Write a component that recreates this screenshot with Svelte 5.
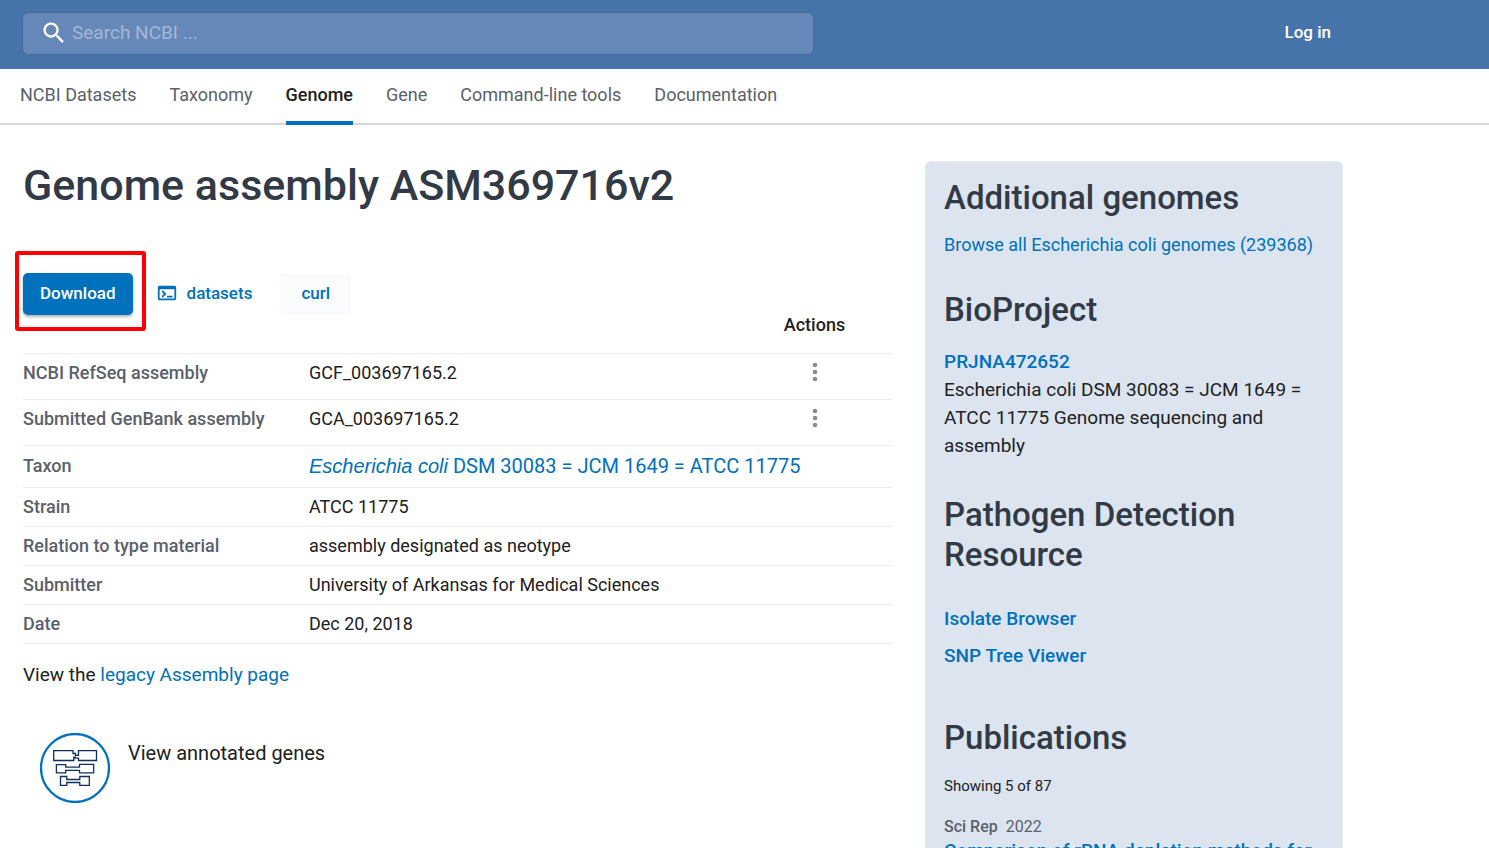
<script>
  const tabs = ['NCBI Datasets', 'Taxonomy', 'Genome', 'Gene', 'Command-line tools', 'Documentation'];
  const current = 'Genome';

  const assemblies = [
    { label: 'NCBI RefSeq assembly', accession: 'GCF_003697165.2' },
    { label: 'Submitted GenBank assembly', accession: 'GCA_003697165.2' }
  ];

  const details = [
    { label: 'Strain', value: 'ATCC 11775' },
    { label: 'Relation to type material', value: 'assembly designated as neotype' },
    { label: 'Submitter', value: 'University of Arkansas for Medical Sciences' },
    { label: 'Date', value: 'Dec 20, 2018' }
  ];

  let query = '';
</script>

<div class="page">
  <header>
    <label class="search">
      <svg width="28" height="28" viewBox="0 0 24 24" aria-hidden="true">
        <path d="M15.5 14h-.79l-.28-.27C15.41 12.59 16 11.11 16 9.5 16 5.91 13.09 3 9.5 3S3 5.91 3 9.5 5.91 16 9.5 16c1.61 0 3.09-.59 4.23-1.57l.27.28v.79l5 4.99L20.49 19l-4.99-5zm-6 0C7.01 14 5 11.99 5 9.5S7.01 5 9.5 5 14 7.01 14 9.5 11.99 14 9.5 14z" />
      </svg>
      <input type="text" placeholder="Search NCBI ..." aria-label="Search NCBI" bind:value={query} />
    </label>
    <a class="login" href="#login">Log in</a>
  </header>

  <nav>
    {#each tabs as tab}
      <a href="#{tab}" class:active={tab === current}>{tab}</a>
    {/each}
  </nav>

  <div class="content">
    <main>
      <h1>Genome assembly ASM369716v2</h1>

      <div class="buttons">
        <span class="marked">
          <button class="download">Download</button>
        </span>
        <button class="datasets">
          <svg width="22" height="22" viewBox="0 0 24 24" aria-hidden="true">
            <path d="M20 4H4c-1.11 0-2 .9-2 2v12c0 1.1.89 2 2 2h16c1.1 0 2-.9 2-2V6c0-1.1-.89-2-2-2zm0 14H4V8h16v10zm-2-1h-6v-2h6v2zM7.5 17l-1.41-1.41L8.67 13l-2.59-2.59L7.5 9l4 4-4 4z" />
          </svg>
          datasets
        </button>
        <button class="curl">curl</button>
      </div>

      <table>
        <thead>
          <tr>
            <td class="name"></td>
            <td></td>
            <th class="actions" scope="col">Actions</th>
          </tr>
        </thead>
        <tbody>
          {#each assemblies as { label, accession }}
            <tr class="assembly">
              <th scope="row">{label}</th>
              <td>{accession}</td>
              <td class="actions">
                <button class="menu" aria-label="Actions for {accession}">
                  <svg width="26" height="26" viewBox="0 0 26 26" aria-hidden="true">
                    <circle cx="13" cy="6" r="2.3" />
                    <circle cx="13" cy="13" r="2.3" />
                    <circle cx="13" cy="20" r="2.3" />
                  </svg>
                </button>
              </td>
            </tr>
          {/each}
          <tr class="taxon">
            <th scope="row">Taxon</th>
            <td colspan="2"><a href="#taxon"><em>Escherichia coli</em> DSM 30083 = JCM 1649 = ATCC 11775</a></td>
          </tr>
          {#each details as { label, value }}
            <tr>
              <th scope="row">{label}</th>
              <td colspan="2">{value}</td>
            </tr>
          {/each}
        </tbody>
      </table>

      <p class="legacy">View the <a href="#legacy">legacy Assembly page</a></p>

      <div class="genes">
        <svg width="70" height="70" viewBox="0 0 70 70" aria-hidden="true">
          <circle cx="35" cy="35" r="34" fill="none" stroke="#0071bc" stroke-width="2.3" />
          <g fill="none" stroke="#112e61" stroke-width="1.3">
            <path d="M13.7 17.7H33v2.8h2.5v1.8h3V17.7h18v9.8h-18v-2.3h-3.2v-1h-1.5v3.3H13.7z" />
            <path d="M16.4 31.6h9.3v2.6h13.8v-2.8h14.2v8.5H39.500v-2.500H25.700v2.500h-9.300z" />
            <path d="M20.500 43.500h6.300v3h13v-3h9.500v8.800h-9.500v-2.800h-13v2.800h-6.300z" />
          </g>
        </svg>
        <span>View annotated genes</span>
      </div>
    </main>

    <aside>
      <section>
        <h2>Additional genomes</h2>
        <a class="browse" href="#genomes">Browse all Escherichia coli genomes (239368)</a>
      </section>

      <section class="bioproject">
        <h2>BioProject</h2>
        <a class="strong" href="#bioproject">PRJNA472652</a>
        <p>Escherichia coli DSM 30083 = JCM 1649 = ATCC 11775 Genome sequencing and assembly</p>
      </section>

      <section class="pathogen">
        <h2>Pathogen Detection Resource</h2>
        <a class="strong" href="#isolates">Isolate Browser</a>
        <a class="strong" href="#snp">SNP Tree Viewer</a>
      </section>

      <section class="publications">
        <h2>Publications</h2>
        <p class="showing">Showing 5 of 87</p>
        <p class="journal"><b>Sci Rep</b> <span>2022</span></p>
        <a class="strong" href="#publication">Comparison of rRNA depletion methods for</a>
      </section>
    </aside>
  </div>
</div>

<style>
  :global(body) {
    margin: 0;
    background: #fff;
  }

  .page {
    background: linear-gradient(#4773ab, #4773ab) 0 0 / 100% 69px no-repeat;
    font-family: Roboto, "Liberation Sans", sans-serif;
    font-size: 18px;
    line-height: 20px;
    color: #212121;
  }

  .page * {
    box-sizing: border-box;
  }

  a {
    color: #0071bc;
    text-decoration: none;
  }

  button {
    font: inherit;
    border: 0;
    padding: 0;
    background: none;
    cursor: pointer;
  }

  h1,
  h2,
  p {
    margin: 0;
  }

  header {
    display: flex;
    align-items: center;
    justify-content: space-between;
    max-width: 1353px;
    padding: 12px 22px 14px;
  }

  .search {
    display: flex;
    align-items: center;
    gap: 4px;
    flex: 0 1 792px;
    height: 43px;
    padding: 0 17px 2px;
    border: 1px solid #476a99;
    border-radius: 6px;
    background: #6588b8;
  }

  .search svg {
    fill: #fff;
  }

  .search input {
    flex: 1;
    min-width: 0;
    padding: 0;
    border: 0;
    outline: 0;
    background: none;
    color: #fff;
    font: inherit;
    font-size: 19px;
  }

  .search input::placeholder {
    color: #a3b8d4;
    opacity: 1;
  }

  .login {
    padding-bottom: 3px;
    color: #fff;
    font-size: 17px;
    font-weight: 500;
  }

  nav {
    display: flex;
    gap: 33px;
    height: 56px;
    padding: 0 20px;
    border-bottom: 2px solid #d6d7d9;
  }

  nav a {
    height: 56px;
    padding-top: 16px;
    color: #5b616b;
  }

  nav a.active {
    border-bottom: 4px solid #0071bc;
    color: #212121;
    font-weight: 500;
  }

  .content {
    display: grid;
    grid-template-columns: minmax(0, 1fr) 418px;
    gap: 33px;
    max-width: 1343px;
    padding: 36px 0 0 23px;
  }

  h1 {
    color: #323a45;
    font-size: 43px;
    font-weight: 500;
    line-height: 48px;
  }

  .buttons {
    display: flex;
    align-items: center;
    margin-top: 64px;
    font-size: 17px;
    font-weight: 500;
  }

  .buttons button {
    height: 42px;
    padding-bottom: 2px;
  }

  .marked {
    position: relative;
  }

  .marked::after {
    content: "";
    position: absolute;
    inset: -22px -13px -16px -8px;
    border: 4px solid #f00;
    border-radius: 3px;
    pointer-events: none;
  }

  .buttons .download {
    display: block;
    padding: 0 17px 2px;
    border-radius: 5px;
    background: #0071bc;
    color: #fff;
    box-shadow: 0 2px 3px rgba(0, 0, 0, 0.3);
  }

  .datasets {
    display: flex;
    align-items: center;
    gap: 9px;
    margin-left: 23px;
    color: #0071bc;
  }

  .datasets svg {
    fill: currentColor;
  }

  .buttons .curl {
    margin-left: 28px;
    padding: 0 21px 2px;
    border-radius: 5px;
    background: #fafbfd;
    color: #0071bc;
  }

  table {
    width: 100%;
    border-collapse: collapse;
    table-layout: fixed;
  }

  th,
  td {
    padding: 9px 0;
    text-align: left;
    vertical-align: top;
    font-weight: 400;
  }

  thead th,
  thead td {
    padding: 0 0 18px;
    font-weight: 500;
  }

  .name {
    width: 286px;
  }

  .actions {
    width: 155px;
    text-align: center;
  }

  tbody th {
    color: #5b616b;
    font-weight: 500;
  }

  tbody tr {
    border-top: 1px solid #ededed;
  }

  tbody tr:last-child {
    border-bottom: 1px solid #ededed;
  }

  .assembly th,
  .assembly td {
    padding-bottom: 16px;
  }

  .assembly .actions {
    padding: 5px 0 0;
  }

  .menu svg {
    display: block;
    fill: #8a8a8a;
  }

  .taxon th,
  .taxon td {
    padding: 10px 0 11px;
  }

  .taxon td {
    font-size: 20px;
  }

  em {
    font-family: "Liberation Sans", sans-serif;
  }

  .legacy {
    margin-top: 21px;
    font-size: 19px;
  }

  .genes {
    display: flex;
    gap: 18px;
    margin-top: 48px;
    padding-left: 17px;
    font-size: 20px;
  }

  .genes span {
    padding-top: 10px;
  }

  aside {
    padding: 16px 18px 80px;
    border: 1px solid #e4e8ee;
    border-radius: 6px;
    background: #dce4ef;
  }

  h2 {
    color: #323a45;
    font-size: 33px;
    font-weight: 500;
    line-height: 40px;
  }

  .browse {
    display: block;
    margin-top: 17px;
  }

  .strong {
    display: block;
    font-size: 19px;
    font-weight: 500;
    line-height: 28px;
  }

  .bioproject {
    margin-top: 35px;
    font-size: 19px;
    line-height: 28px;
  }

  .bioproject .strong {
    margin-top: 18px;
  }

  .pathogen {
    margin-top: 35px;
  }

  .pathogen h2 {
    margin-bottom: 30px;
  }

  .pathogen .strong {
    margin-bottom: 9px;
  }

  .publications {
    margin-top: 48px;
  }

  .showing {
    margin-top: 18px;
    font-size: 15px;
  }

  .journal {
    margin-top: 21px;
    color: #5b616b;
    font-size: 16px;
  }

  .journal b {
    font-weight: 500;
  }

  .journal span {
    margin-left: 4px;
  }
</style>
